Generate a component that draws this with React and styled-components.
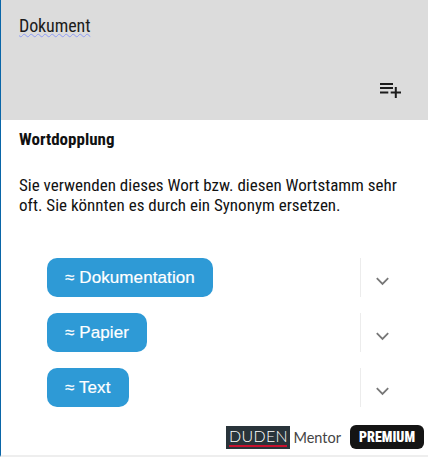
import React from 'react';
import styled, { createGlobalStyle } from 'styled-components';

const Global = createGlobalStyle`
html,body{margin:0;padding:0;background:#fff;}
#root{width:428px;height:457px;overflow:hidden;}
`;
const Panel = styled.div`
display:flex;
flex-direction:column;
box-sizing:border-box;
width:428px;
height:457px;
border-left:1px solid #0a66a8;
border-bottom:2px solid #eeeeee;
font-family:Roboto,"Liberation Sans",sans-serif;
font-stretch:75%;
color:#111;
`;
const Header = styled.header`
display:flex;
flex-direction:column;
justify-content:space-between;
box-sizing:border-box;
height:120px;
padding:16px 27px 22px 18px;
background:#dcdcdc;
`;
const Title = styled.div`
font-size:18px;
line-height:20px;
letter-spacing:-0.1px;
color:#1c1c1c;
`;
const Squiggle = styled.span`
text-decoration:underline wavy #8f9cf5 1px;
text-underline-offset:1px;
`;
const AddIcon = styled.svg`
align-self:flex-end;
display:block;
`;
const Body = styled.section`
padding:9px 18px 0;
`;
const Heading = styled.h2`
margin:0;
font-size:17px;
line-height:20px;
font-weight:700;
`;
const Text = styled.p`
margin:26px 0 0;
font-size:17px;
line-height:20px;
white-space:nowrap;
`;
const Suggestions = styled.div`
display:flex;
flex-direction:column;
gap:16px;
margin-top:43px;
padding-left:28px;
`;
const Row = styled.div`
display:flex;
align-items:center;
height:39px;
`;
const Pill = styled.button`
height:39px;
padding:0 18px;
border:0;
border-radius:10px;
background:#2e9ad6;
color:#fff;
font-family:"Liberation Sans",Arial,sans-serif;
font-size:17px;
font-weight:400;
letter-spacing:0.1px;
-webkit-text-stroke:0.2px #fff;
white-space:nowrap;
`;
const Divider = styled.div`
margin-left:auto;
width:1px;
height:39px;
background:#ececec;
`;
const Chevron = styled.svg`
display:block;
margin:7px 21px 0 15px;
`;
const Footer = styled.footer`
display:flex;
align-items:center;
margin-top:auto;
padding:0 4px 6px 0;
justify-content:flex-end;
`;
const Logo = styled.div`
box-sizing:border-box;
width:64px;
height:23px;
background:#29343a;
color:#fff;
font-family:Lato,sans-serif;
font-size:16px;
font-weight:300;
line-height:19px;
text-align:center;
letter-spacing:0.3px;
position:relative;
`;
const LogoLine = styled.span`
position:absolute;
left:3px;
right:3px;
bottom:2px;
height:2px;
background:#c8102e;
`;
const Mentor = styled.span`
margin:0 9px 0 3px;
font-family:Lato,sans-serif;
font-size:14.5px;
font-weight:400;
font-stretch:normal;
color:#444;
`;
const Premium = styled.span`
box-sizing:border-box;
width:74px;
height:24px;
border-radius:6px;
background:#141414;
color:#fff;
font-size:14px;
line-height:24px;
font-weight:900;
text-align:center;
`;

const words = ['Dokumentation', 'Papier', 'Text'];

export default function App() {
  return (
    <Panel>
      <Global />
      <Header>
        <Title><Squiggle>Dokument</Squiggle></Title>
        <AddIcon width="21" height="15" viewBox="0 0 21 15">
          <path d="M0 1h13M0 5h13M0 9.5h8.3M10.7 9.5H21M15.8 4v11" stroke="#1c1c1c" strokeWidth="2" fill="none" />
        </AddIcon>
      </Header>
      <Body>
        <Heading>Wortdopplung</Heading>
        <Text>Sie verwenden dieses Wort bzw. diesen Wortstamm sehr<br />oft. Sie könnten es durch ein Synonym ersetzen.</Text>
        <Suggestions>
          {words.map((w) => (
            <Row key={w}>
              <Pill>≈ {w}</Pill>
              <Divider />
              <Chevron width="13" height="9" viewBox="0 0 13 9">
                <path d="M0.8 1.2l5.7 5.7l5.7-5.7" stroke="#777" strokeWidth="1.8" fill="none" />
              </Chevron>
            </Row>
          ))}
        </Suggestions>
      </Body>
      <Footer>
        <Logo>DUDEN<LogoLine /></Logo>
        <Mentor>Mentor</Mentor>
        <Premium>PREMIUM</Premium>
      </Footer>
    </Panel>
  );
}
